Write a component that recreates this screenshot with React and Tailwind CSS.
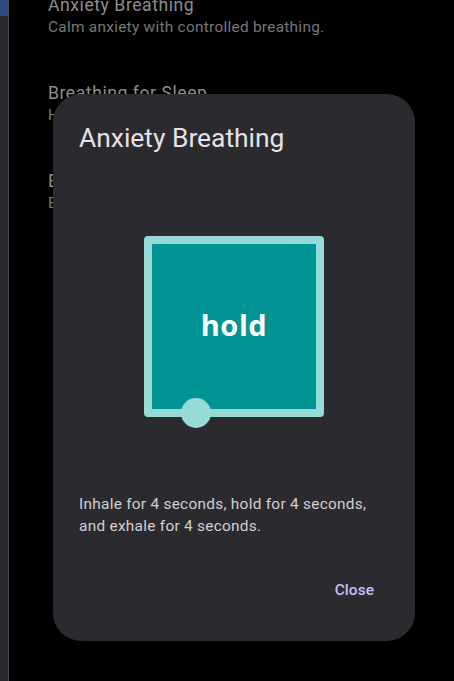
import React from 'react';

const EXERCISES = [
  { title: 'Anxiety Breathing', subtitle: 'Calm anxiety with controlled breathing.' },
  { title: 'Breathing for Sleep', subtitle: 'Help yourself fall asleep with slow breathing.' },
  { title: 'Box Breathing', subtitle: 'Breathe in a steady four-part rhythm.' },
];

const ExerciseItem = ({ title, subtitle }) => (
  <div className="py-[22px]">
    <div className="text-[17.6px] leading-6 tracking-[0.55px] text-[#8e8e8e] whitespace-nowrap">{title}</div>
    <div className="text-[15.4px] leading-5 tracking-[0.275px] text-[#777777] whitespace-nowrap">{subtitle}</div>
  </div>
);

// ─── Breathing square with the moving dot ─────────────────
const BreathingBox = ({ phase }) => (
  <div className="relative w-[180px] h-[181px] rounded-[4px] border-8 border-[#95dcd9] bg-[#009494] flex items-center justify-center">
    <span className="-mt-[4px] text-white text-[29px] font-bold tracking-[0.6px] font-['Open_Sans','Lato',sans-serif]">{phase}</span>
    <div className="absolute left-[29px] top-[154px] w-[30px] h-[30px] rounded-full bg-[#95dcd9]" />
  </div>
);

export default function App() {
  return (
    <div className="relative w-[454px] h-[681px] bg-black overflow-hidden flex font-['Roboto','Noto_Sans',sans-serif]">
      {/* Side rail */}
      <div className="w-[9px] shrink-0 flex flex-col bg-[#27282c] border-r border-[#4b4c50]">
        <div className="h-[16px] bg-[#2d4a86]" />
      </div>

      {/* List behind the dialog */}
      <div className="pl-[39px] -mt-[29px]">
        {EXERCISES.map(ex => (
          <ExerciseItem key={ex.title} {...ex} />
        ))}
      </div>

      {/* Dialog */}
      <div className="absolute left-[53px] top-[94px] w-[362px] h-[547px] rounded-[28px] bg-[#2b2a2e] flex flex-col px-[26px]">
        <h2 className="mt-[27px] text-[26.4px] leading-[35px] text-[#e6e1e6]">Anxiety Breathing</h2>
        <div className="mt-[80px] flex justify-center">
          <BreathingBox phase="hold" />
        </div>
        <p className="mt-[76px] text-[15.4px] leading-[22px] tracking-[0.275px] text-[#d2d0d4]">
          Inhale for 4 seconds, hold for 4 seconds, and exhale for 4 seconds.
        </p>
        <div className="mt-[43px] flex justify-end pr-[15px]">
          <button className="text-[15.4px] leading-5 tracking-[0.1px] font-medium text-[#cdbdf5]">Close</button>
        </div>
      </div>
    </div>
  );
}
